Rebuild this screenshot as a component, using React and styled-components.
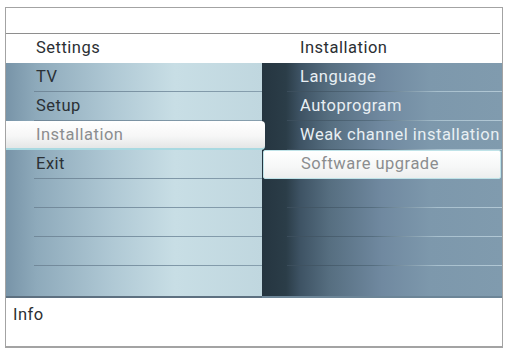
import React from 'react'
import styled, { createGlobalStyle } from 'styled-components'

const GlobalStyle = createGlobalStyle`
  html, body {
    margin: 0;
    padding: 0;
    background: #ffffff;
  }
  body {
    font-family: Roboto, 'Liberation Sans', sans-serif;
  }
`

const settings = ['TV', 'Setup', 'Installation', 'Exit', '', '', '', '']
const installation = [
  'Language',
  'Autoprogram',
  'Weak channel installation',
  'Software upgrade',
  '',
  '',
  '',
  '',
]

export default function App() {
  return (
    <>
      <GlobalStyle />
      <Page>
        <Frame>
          <Header />
          <Columns>
            <Column>
              <Title>Settings</Title>
              <Panel side='left'>
                {settings.map((item, i) => (
                  <Row key={i} side='left' active={i === 2} last={i === 7}>
                    {item}
                  </Row>
                ))}
              </Panel>
            </Column>
            <Column>
              <Title>Installation</Title>
              <Panel side='right'>
                {installation.map((item, i) => (
                  <Row key={i} side='right' active={i === 3} last={i === 7}>
                    {item}
                  </Row>
                ))}
              </Panel>
            </Column>
          </Columns>
          <Info>Info</Info>
        </Frame>
      </Page>
    </>
  )
}

const Page = styled.div`
  width: 507px;
  height: 348px;
  padding: 7px 0 0 5px;
  box-sizing: border-box;
`

const Frame = styled.div`
  width: 498px;
  height: 341px;
  box-sizing: border-box;
  border: 1px solid #a3a3a3;
  border-bottom: none;
  display: flex;
  flex-direction: column;
  background: #ffffff;
`

const Header = styled.div`
  height: 25px;
  border-bottom: 1px solid #8e8e8e;
  margin-right: 2px;
`

const Columns = styled.div`
  display: grid;
  grid-template-columns: 256px 1fr;
`

const Column = styled.div`
  display: flex;
  flex-direction: column;
`

const Title = styled.div`
  height: 29px;
  line-height: 28px;
  padding-left: ${(p) => (p.children === 'Settings' ? '30px' : '38px')};
  font-size: 16.5px;
  letter-spacing: 0.5px;
  color: #2b2f33;
`

const Panel = styled.div`
  display: flex;
  flex-direction: column;
  height: 235px;
  border-bottom: 2px solid ${(p) => (p.side === 'left' ? '#5d7080' : '#6c8597')};
  box-sizing: border-box;
  background: ${(p) =>
    p.side === 'left'
      ? 'linear-gradient(to right, #7894a8 0%, #8eaabb 12%, #b0c9d5 42%, #c8dee5 66%, #c0d7df 100%)'
      : 'linear-gradient(to right, #253540 0%, #2b3d48 10%, #3e5364 16%, #566e80 28%, #7089a0 50%, #7d98ac 70%, #809bae 100%)'};
`

const Row = styled.div`
  position: relative;
  height: ${(p) => (p.last ? '32px' : '29px')};
  flex: none;
  box-sizing: border-box;
  font-size: 16.5px;
  letter-spacing: 0.5px;
  line-height: 28px;
  white-space: nowrap;
  padding-left: ${(p) => (p.side === 'left' ? '30px' : '38px')};
  color: ${(p) => (p.side === 'left' ? '#2b3136' : '#e8eff3')};

  &::after {
    content: '';
    position: absolute;
    left: ${(p) => (p.side === 'left' ? '28px' : '25px')};
    right: 0;
    bottom: 0;
    height: 1px;
    display: ${(p) => (p.last ? 'none' : 'block')};
    background: ${(p) =>
      p.side === 'left'
        ? 'linear-gradient(to right, #718899, #7f97a7 60%, #879fae)'
        : 'linear-gradient(to right, #3a4c5a, #566e80 40%, #a7bfcd 70%, #b2c8d5)'};
  }

  ${(p) =>
    p.active &&
    p.side === 'left' &&
    `
    margin-right: -3px;
    z-index: 1;
    color: #8b8d8f;
    background: linear-gradient(to bottom, #ffffff 0%, #f7f7f7 55%, #e4e6e6 100%);
    border-bottom: 2px solid #a9d9e1;
    border-radius: 0 4px 4px 0;
    line-height: 27px;
    &::after { display: none; }
  `}

  ${(p) =>
    p.active &&
    p.side === 'right' &&
    `
    margin-left: 1px;
    margin-right: 1px;
    color: #8b8d8f;
    background: linear-gradient(to bottom, #ffffff 0%, #f6f7f7 60%, #eceeee 100%);
    border: 1px solid #bfe3e8;
    border-radius: 2px;
    line-height: 26px;
    padding-left: 37px;
    &::after { display: none; }
  `}
`

const Info = styled.div`
  flex: 1;
  padding: 7px 0 0 7px;
  font-size: 16.5px;
  letter-spacing: 0.5px;
  color: #2b2f33;
  border-bottom: 2px solid #a3a3a3;
`
